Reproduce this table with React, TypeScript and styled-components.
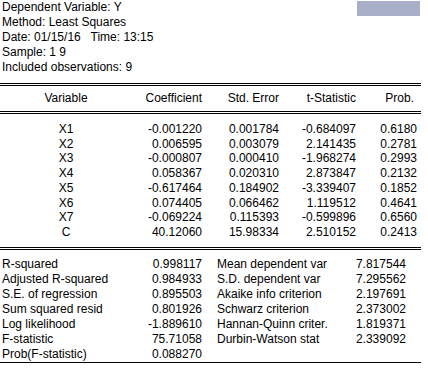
import styled, { createGlobalStyle } from "styled-components"

const coefficients = [
  ["X1", "-0.001220", "0.001784", "-0.684097", "0.6180"],
  ["X2", "0.006595", "0.003079", "2.141435", "0.2781"],
  ["X3", "-0.000807", "0.000410", "-1.968274", "0.2993"],
  ["X4", "0.058367", "0.020310", "2.873847", "0.2132"],
  ["X5", "-0.617464", "0.184902", "-3.339407", "0.1852"],
  ["X6", "0.074405", "0.066462", "1.119512", "0.4641"],
  ["X7", "-0.069224", "0.115393", "-0.599896", "0.6560"],
  ["C", "40.12060", "15.98334", "2.510152", "0.2413"],
]

const leftStats = [
  ["R-squared", "0.998117"],
  ["Adjusted R-squared", "0.984933"],
  ["S.E. of regression", "0.895503"],
  ["Sum squared resid", "0.801926"],
  ["Log likelihood", "-1.889610"],
  ["F-statistic", "75.71058"],
  ["Prob(F-statistic)", "0.088270"],
]

const rightStats = [
  ["Mean dependent var", "7.817544"],
  ["S.D. dependent var", "7.295562"],
  ["Akaike info criterion", "2.197691"],
  ["Schwarz criterion", "2.373002"],
  ["Hannan-Quinn criter.", "1.819371"],
  ["Durbin-Watson stat", "2.339092"],
]

export default function App() {
  return (
    <>
      <GlobalStyle />
      <Sheet>
        <HeaderWrapper>
          <InfoLines>
            <div>Dependent Variable: Y</div>
            <div>Method: Least Squares</div>
            <div>Date: 01/15/16&nbsp;&nbsp; Time: 13:15</div>
            <div>Sample: 1 9</div>
            <div>Included observations: 9</div>
          </InfoLines>
          <Swatch />
        </HeaderWrapper>

        <DoubleRule $top={8} />
        <ColumnHeader>
          <Cell $center>Variable</Cell>
          <Cell>Coefficient</Cell>
          <Cell>Std. Error</Cell>
          <Cell>t-Statistic</Cell>
          <Cell $pad={3}>Prob.</Cell>
        </ColumnHeader>
        <DoubleRule />

        <CoefBody>
          {coefficients.map((row) => (
            <CoefRow key={row[0]}>
              {row.map((v, i) => (
                <Cell key={i} $center={i === 0}>
                  {v}
                </Cell>
              ))}
            </CoefRow>
          ))}
        </CoefBody>
        <DoubleRule $top={7} />

        <StatsWrapper>
          <StatsPane $left={2} $width={202}>
            {leftStats.map(([label, value]) => (
              <StatRow key={label}>
                <span>{label}</span>
                <span>{value}</span>
              </StatRow>
            ))}
          </StatsPane>
          <StatsPane $left={15} $width={204}>
            {rightStats.map(([label, value]) => (
              <StatRow key={label}>
                <span>{label}</span>
                <span>{value}</span>
              </StatRow>
            ))}
          </StatsPane>
        </StatsWrapper>
        <SingleRule />
      </Sheet>
    </>
  )
}

const GlobalStyle = createGlobalStyle`
  body {
    margin: 0;
    background: #ffffff;
    color: #000000;
    font-family: Arial, "Liberation Sans", sans-serif;
    font-size: 12px;
  }
`

const Sheet = styled.div`
  width: 421px;
  background: #ffffff;
`

const HeaderWrapper = styled.div`
  display: flex;
  justify-content: space-between;
  align-items: flex-start;
`

const InfoLines = styled.div`
  padding-left: 2px;
  line-height: 15px;
  white-space: nowrap;
`

const Swatch = styled.div`
  width: 63px;
  height: 15px;
  margin-top: 1px;
  margin-right: 1px;
  background: #a9afc9;
`

const DoubleRule = styled.div<{ $top?: number }>`
  height: 1px;
  margin-top: ${(p) => p.$top ?? 0}px;
  border-top: 1px solid #000;
  border-bottom: 1px solid #000;
`

const SingleRule = styled.div`
  border-top: 1px solid #000;
`

const ColumnHeader = styled.div`
  display: grid;
  grid-template-columns: 132px 70px 77px 77px 61px;
  line-height: 25px;
`

const CoefBody = styled.div`
  padding-top: 8px;
`

const CoefRow = styled.div`
  display: grid;
  grid-template-columns: 132px 70px 77px 77px 61px;
  line-height: 14.7px;
`

const Cell = styled.div<{ $center?: boolean; $pad?: number }>`
  text-align: ${(p) => (p.$center ? "center" : "right")};
  padding-right: ${(p) => p.$pad ?? 0}px;
  white-space: nowrap;
`

const StatsWrapper = styled.div`
  display: flex;
  align-items: flex-start;
  padding-top: 7px;
`

const StatsPane = styled.div<{ $left: number; $width: number }>`
  width: ${(p) => p.$width}px;
  padding-left: ${(p) => p.$left}px;
  box-sizing: border-box;
  line-height: 15px;
`

const StatRow = styled.div`
  display: flex;
  justify-content: space-between;
  white-space: nowrap;
`
